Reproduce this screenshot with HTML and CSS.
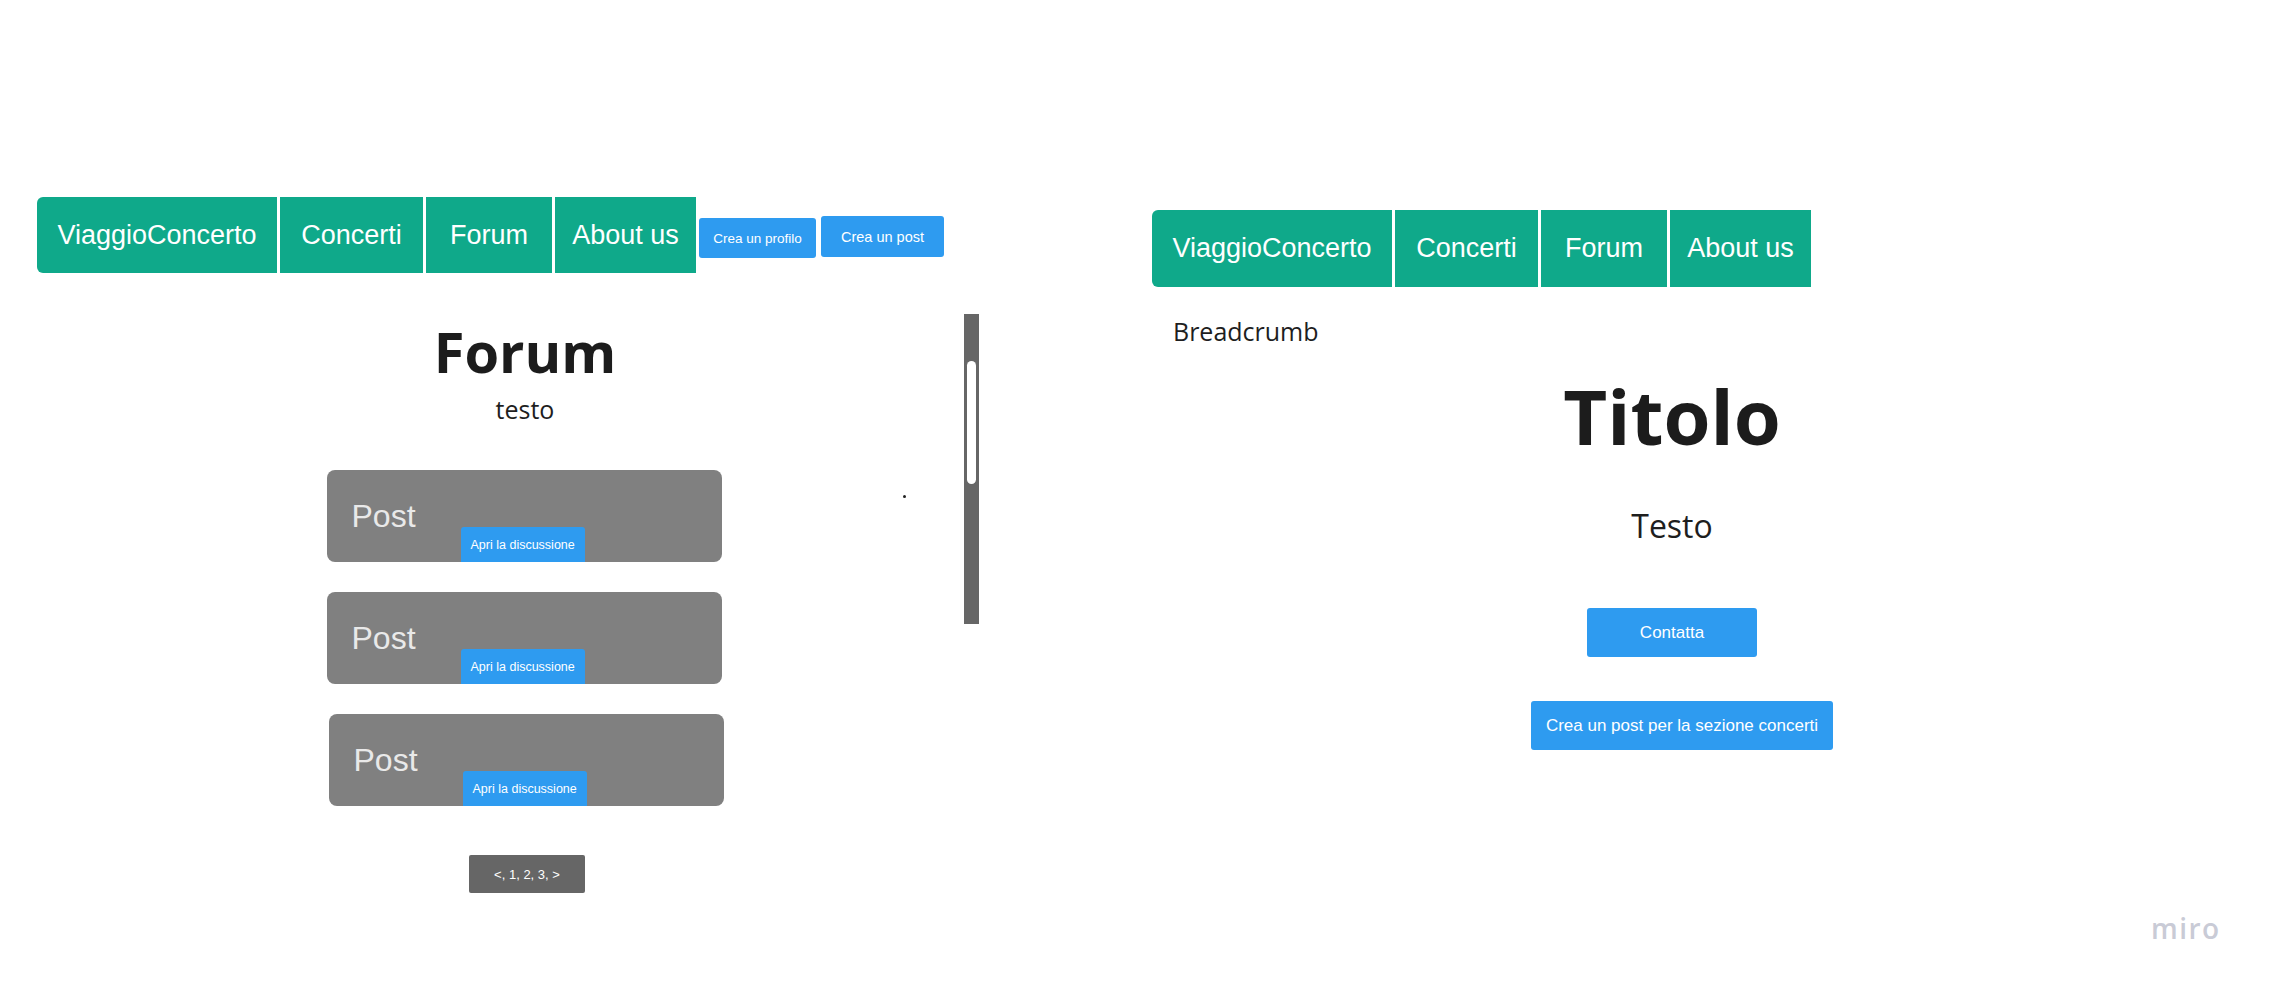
FILE: index.html
```html
<!DOCTYPE html>
<html lang="it">
<head>
<meta charset="utf-8">
<title>ViaggioConcerto</title>
<link rel="stylesheet" href="styles.css">
</head>
<body>
<div class="board">
  <section class="frame frame-forum">
    <div class="toprow">
      <nav class="nav">
        <a class="nav-item first w-brand">ViaggioConcerto</a>
        <a class="nav-item w-concerti">Concerti</a>
        <a class="nav-item w-forum">Forum</a>
        <a class="nav-item w-about">About us</a>
      </nav>
      <a class="btn btn-profile">Crea un profilo</a>
      <a class="btn btn-newpost">Crea un post</a>
    </div>
    <div class="content">
      <div class="main-col">
        <h1 class="h-forum">Forum</h1>
        <p class="sub-forum">testo</p>
        <div class="cards">
          <div class="card"><span class="card-title">Post</span><a class="btn btn-open">Apri la discussione</a></div>
          <div class="card"><span class="card-title">Post</span><a class="btn btn-open">Apri la discussione</a></div>
          <div class="card card-shift"><span class="card-title">Post</span><a class="btn btn-open">Apri la discussione</a></div>
        </div>
        <a class="pager">&lt;, 1, 2, 3, &gt;</a>
      </div>
      <div class="scrollbar"><div class="thumb"></div></div>
      <span class="dot"></span>
    </div>
  </section>

  <section class="frame frame-detail">
    <nav class="nav nav-right">
      <a class="nav-item first w-brand">ViaggioConcerto</a>
      <a class="nav-item w-concerti">Concerti</a>
      <a class="nav-item w-forum">Forum</a>
      <a class="nav-item w-about">About us</a>
    </nav>
    <p class="breadcrumb">Breadcrumb</p>
    <div class="detail-col">
      <h1 class="h-title">Titolo</h1>
      <p class="sub-title">Testo</p>
      <a class="btn btn-contact">Contatta</a>
      <a class="btn btn-concert">Crea un post per la sezione concerti</a>
    </div>
  </section>

  <div class="miro">miro</div>
</div>
</body>
</html>
```

FILE: styles.css
```css
* { box-sizing: border-box; }
html, body { margin: 0; padding: 0; background: #ffffff; }
body { width: 2273px; height: 989px; overflow: hidden; }
.board { position: relative; width: 2273px; height: 989px; }
a { text-decoration: none; cursor: default; }
p, h1 { margin: 0; }

.frame { position: absolute; }
.frame-forum { left: 37px; top: 197px; width: 976px; }
.frame-detail { left: 1152px; top: 210px; width: 1040px; }

/* nav */
.toprow { display: flex; align-items: flex-start; }
.nav { display: flex; gap: 3px; }
.nav-item {
  display: flex; align-items: center; justify-content: center;
  height: 76px;
  background: #0fa98a; color: #ffffff;
  font-family: "Liberation Sans", Arial, sans-serif; font-size: 27px;
  white-space: nowrap;
}
.w-brand { width: 240px; }
.w-concerti { width: 143px; }
.w-forum { width: 126px; }
.w-about { width: 141px; }
.nav-right .nav-item { height: 77px; }
.nav-item.first { border-radius: 6px 0 0 6px; }

.btn {
  display: inline-flex; align-items: center; justify-content: center;
  background: #2e9bf0; color: #ffffff;
  font-family: "Liberation Sans", Arial, sans-serif;
  white-space: nowrap; border-radius: 3px;
}
.btn-profile { margin: 21px 0 0 3px; width: 117px; height: 40px; font-size: 13.5px; }
.btn-newpost { margin: 19px 0 0 5px; width: 123px; height: 41px; font-size: 14.5px; }

/* forum content */
.content { position: relative; margin-top: 41px; height: 600px; }
.main-col { width: 976px; display: flex; flex-direction: column; align-items: center; }
.h-forum {
  margin-top: 9px;
  font-family: "Open Sans", "Noto Sans", sans-serif; font-weight: 700;
  font-size: 56px; line-height: 57px; color: #1c1c1c;
}
.sub-forum {
  margin-top: 17px;
  font-family: "Open Sans", "Noto Sans", sans-serif; font-weight: 400;
  font-size: 25px; line-height: 25px; color: #1e1e1e;
}
.cards { margin-top: 48px; display: flex; flex-direction: column; gap: 30px; }
.card {
  width: 395px; height: 92px; padding-left: 25px;
  background: #808080; border-radius: 8px;
  display: flex; align-items: flex-start;
}
.card-shift { margin-left: 2px; }
.card-title {
  margin-top: 30px;
  font-family: "Liberation Sans", Arial, sans-serif;
  font-size: 32px; line-height: 32px; color: #e9e9e9;
}
.btn-open {
  align-self: flex-end; margin-left: 45px;
  height: 35px; padding: 0 10px; font-size: 12.5px;
  border-radius: 3px 3px 0 0;
}
.pager {
  margin-top: 49px; margin-left: 4px;
  width: 116px; height: 38px;
  display: flex; align-items: center; justify-content: center;
  background: #666666; color: #ffffff; border-radius: 2px;
  font-family: "Liberation Sans", Arial, sans-serif; font-size: 13px;
}
.scrollbar {
  position: absolute; left: 927px; top: 0;
  width: 15px; height: 310px; background: #666666;
}
.thumb {
  position: absolute; left: 3px; top: 47px;
  width: 9px; height: 123px; background: #ffffff; border-radius: 5px;
}
.dot {
  position: absolute; left: 866px; top: 181px;
  width: 3px; height: 3px; background: #222; border-radius: 50%;
}

/* detail frame */
.breadcrumb {
  margin: 31px 0 0 21px;
  font-family: "Open Sans", "Noto Sans", sans-serif; font-weight: 400;
  font-size: 25px; line-height: 26px; color: #1e1e1e;
}
.detail-col { width: 1040px; display: flex; flex-direction: column; align-items: center; }
.h-title {
  margin-top: 34px;
  font-family: "Open Sans", "Noto Sans", sans-serif; font-weight: 700;
  font-size: 76px; line-height: 76px; color: #1c1c1c;
}
.sub-title {
  margin-top: 55px;
  font-family: "Open Sans", "Noto Sans", sans-serif; font-weight: 400;
  font-size: 32px; line-height: 33px; color: #1e1e1e;
}
.btn-contact { margin-top: 66px; width: 170px; height: 49px; font-size: 17px; }
.btn-concert { margin-top: 44px; margin-left: 20px; height: 49px; padding: 0 15px; font-size: 17px; }

.miro {
  position: absolute; left: 2151px; top: 908px;
  font-family: "Open Sans", "Noto Sans", sans-serif; font-weight: 600;
  font-size: 28px; line-height: 40px; letter-spacing: 1.5px; color: #c9cbd6;
}
```
